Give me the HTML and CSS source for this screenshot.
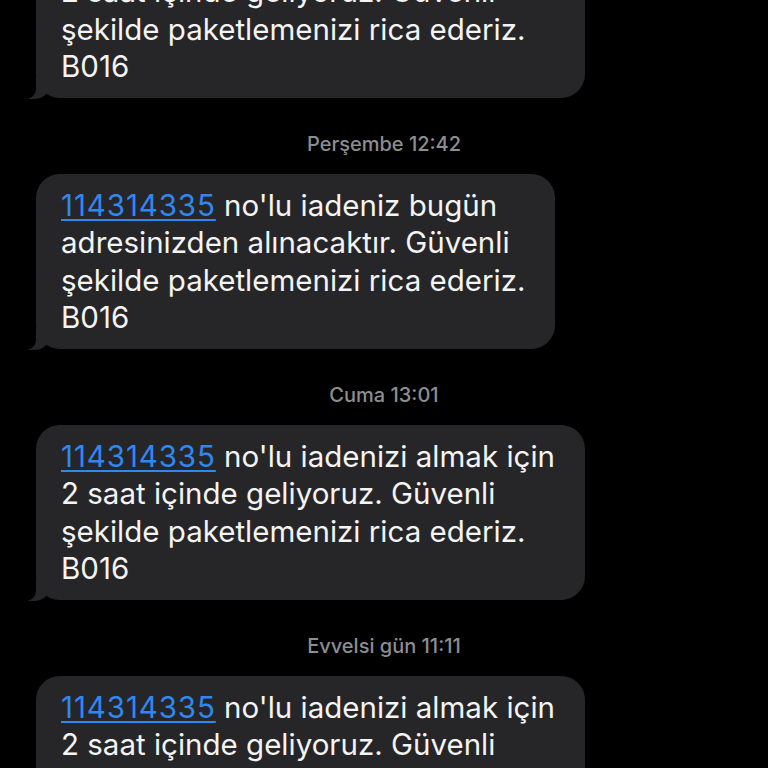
FILE: index.html
```html
<html>
<head>
  <meta charset="utf-8">
  <link rel="stylesheet" href="styles.css">
</head>
<body>
  <div id="thread">
    <div class="bubble">
      <a href="#">114314335</a> no'lu iadenizi almak için<br>
      2 saat içinde geliyoruz. Güvenli<br>
      şekilde paketlemenizi rica ederiz.<br>
      B016
    </div>

    <div class="stamp">Perşembe 12:42</div>
    <div class="bubble">
      <a href="#">114314335</a> no'lu iadeniz bugün<br>
      adresinizden alınacaktır. Güvenli<br>
      şekilde paketlemenizi rica ederiz.<br>
      B016
    </div>

    <div class="stamp">Cuma 13:01</div>
    <div class="bubble">
      <a href="#">114314335</a> no'lu iadenizi almak için<br>
      2 saat içinde geliyoruz. Güvenli<br>
      şekilde paketlemenizi rica ederiz.<br>
      B016
    </div>

    <div class="stamp">Evvelsi gün 11:11</div>
    <div class="bubble">
      <a href="#">114314335</a> no'lu iadenizi almak için<br>
      2 saat içinde geliyoruz. Güvenli<br>
      şekilde paketlemenizi rica ederiz.<br>
      B016
    </div>
  </div><!-- end of thread -->
</body>
</html>
```

FILE: styles.css
```css
html, body { background-color: #000; }
body { margin: 0; overflow: hidden; font-family: Inter, "Noto Sans", sans-serif; }

#thread {
   margin-top: -77px;
   padding-left: 36px;
}

.bubble {
   position: relative;
   width: fit-content;
   padding: 12.5px 30px 12.5px 25px;
   background-color: #262628;
   border-radius: 24px;
   color: #f4f4f4;
   font-size: 29.5px;
   line-height: 37.5px;
}
.bubble a {
   color: #2f88f2;
   text-decoration: underline; text-underline-offset: 3px;
   letter-spacing: 0.9px;
}

/* the little tail at the bottom left */
.bubble::before {
   content: "";
   position: absolute; left: -8px; bottom: -1px;
   width: 22px; height: 22px;
   background-color: #262628;
   border-bottom-right-radius: 16px 14px;
}
.bubble::after {
   content: "";
   position: absolute; left: -26px; bottom: -1px;
   width: 26px; height: 22px;
   background-color: #000;
   border-bottom-right-radius: 10px;
}

.stamp {
   margin: 36px 0 20px -36px;
   text-align: center;
   color: #8d8d92;
   font-size: 20px; font-weight: 500;
   line-height: 20px;
}
```
